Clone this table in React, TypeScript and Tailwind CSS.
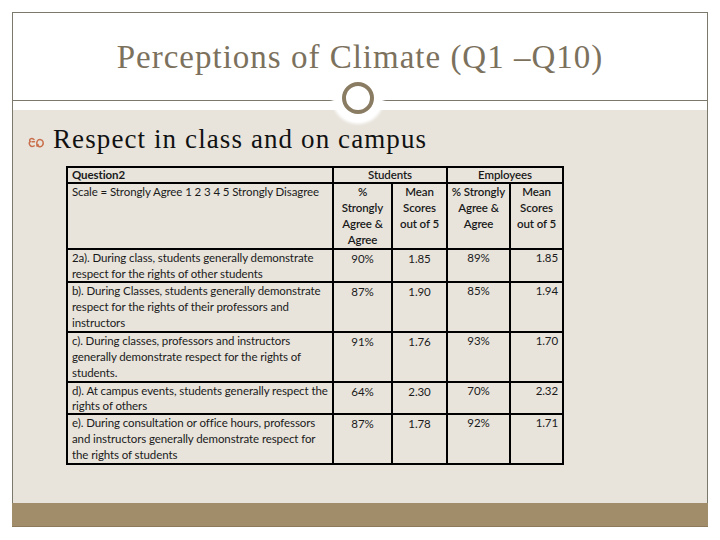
import React from "react";

const cell = "border-2 border-black align-top p-0";

function Bullet() {
  return (
    <svg width="17" height="12" viewBox="0 0 17 12" className="mt-[8px] mr-[8px] shrink-0">
      <path
        d="M6 2.5 C3.5 0.5 0.5 2 2.2 4.6 C0 6.5 2.5 11 6.2 8.8 M4 4.8 L6.5 4.8"
        fill="none"
        stroke="#c96f4c"
        strokeWidth="1.5"
        strokeLinecap="round"
      />
      <path
        d="M9 9 C8 5 9.5 2.5 12 2.5 C15 2.5 16 6 14.5 8.3 C13 10.5 9.8 10 10 7.5"
        fill="none"
        stroke="#c96f4c"
        strokeWidth="1.5"
        strokeLinecap="round"
      />
    </svg>
  );
}

const rows: { q: string[]; h: string; lh: string; sp: string; sm: string; ep: string; em: string }[] = [
  {
    q: ["2a). During class, students generally demonstrate", "respect for the rights of other students"],
    h: "h-[31px]",
    lh: "leading-[15.5px]",
    sp: "90%",
    sm: "1.85",
    ep: "89%",
    em: "1.85",
  },
  {
    q: [
      "b). During Classes, students generally demonstrate",
      "respect for the rights of their professors and",
      "instructors",
    ],
    h: "h-[49px]",
    lh: "leading-[16px]",
    sp: "87%",
    sm: "1.90",
    ep: "85%",
    em: "1.94",
  },
  {
    q: [
      "c). During classes, professors and instructors",
      "generally demonstrate respect for the rights of",
      "students.",
    ],
    h: "h-[48px]",
    lh: "leading-[16px]",
    sp: "91%",
    sm: "1.76",
    ep: "93%",
    em: "1.70",
  },
  {
    q: ["d). At campus events, students generally respect the", "rights of others"],
    h: "h-[30px]",
    lh: "leading-[15px]",
    sp: "64%",
    sm: "2.30",
    ep: "70%",
    em: "2.32",
  },
  {
    q: [
      "e). During consultation or office hours, professors",
      "and instructors generally demonstrate respect for",
      "the rights of students",
    ],
    h: "h-[49px]",
    lh: "leading-[16px]",
    sp: "87%",
    sm: "1.78",
    ep: "92%",
    em: "1.71",
  },
];

export default function App() {
  return (
    <div className="w-[720px] h-[540px] bg-white pt-[12px] px-[12px] overflow-hidden">
      <div className="relative h-[515px] border-x border-t border-[#7d786c] flex flex-col">
        <div className="h-[88px] shrink-0 border-b border-[#7d786c] flex items-center justify-center pt-[2px]">
          <span className="font-['Liberation_Serif',serif] text-[33px] tracking-[1px] text-[#7b715d]">
            Perceptions of Climate (Q1 –Q10)
          </span>
        </div>
        <div className="h-[9px] shrink-0 bg-white" />
        <div className="flex-1 bg-[#e8e4dc] flex flex-col">
          <div className="flex items-center pl-[15px] pt-[14px]">
            <Bullet />
            <span className="font-['Liberation_Serif',serif] text-[27px] leading-[30px] tracking-[1.1px] text-[#111]">
              Respect in class and on campus
            </span>
          </div>
          <div className="ml-[53px] mt-[12px]">
            <table className="table-fixed border-collapse w-[496px] font-['Lato',sans-serif] text-[11.5px] leading-[16px] text-[#1a1a1a] tracking-[-0.1px]">
              <colgroup>
                <col className="w-[266px]" />
                <col className="w-[59px]" />
                <col className="w-[55px]" />
                <col className="w-[63px]" />
                <col className="w-[53px]" />
              </colgroup>
              <tbody>
                <tr className="leading-[14px]">
                  <td className={`${cell} h-[14px] px-[4px] font-bold`}>Question2</td>
                  <td colSpan={2} className={`${cell} text-center font-semibold`}>
                    Students
                  </td>
                  <td colSpan={2} className={`${cell} text-center font-semibold`}>
                    Employees
                  </td>
                </tr>
                <tr>
                  <td className={`${cell} h-[64px] px-[4px]`}>Scale = Strongly Agree 1 2 3 4 5 Strongly Disagree</td>
                  <td className={`${cell} text-center font-semibold`}>
                    %<br />
                    Strongly<br />
                    Agree &amp;<br />
                    Agree
                  </td>
                  <td className={`${cell} text-center font-semibold`}>
                    Mean<br />
                    Scores<br />
                    out of 5
                  </td>
                  <td className={`${cell} text-center font-semibold`}>
                    % Strongly<br />
                    Agree &amp;<br />
                    Agree
                  </td>
                  <td className={`${cell} text-center font-semibold`}>
                    Mean<br />
                    Scores<br />
                    out of 5
                  </td>
                </tr>
                {rows.map((r, i) => (
                  <tr key={i} className={r.lh}>
                    <td className={`${cell} ${r.h} px-[4px] whitespace-nowrap`}>
                      {r.q.map((l, j) => (
                        <div key={j}>{l}</div>
                      ))}
                    </td>
                    <td className={`${cell} text-center pt-[1px]`}>{r.sp}</td>
                    <td className={`${cell} text-center pt-[1px]`}>{r.sm}</td>
                    <td className={`${cell} text-center`}>{r.ep}</td>
                    <td className={`${cell} text-right pr-[4px]`}>{r.em}</td>
                  </tr>
                ))}
              </tbody>
            </table>
          </div>
        </div>
        <div className="h-[24px] shrink-0 -mx-[1px] bg-[#a28d6b] border-b border-[#8d7a5b]" />
        <div className="absolute left-[321px] top-[61px] w-[48px] h-[48px] rounded-full bg-white shadow-[0_0_3px_2px_white] flex items-center justify-center">
          <div className="w-[32px] h-[32px] rounded-full border-[4px] border-[#8a7c62]" />
        </div>
      </div>
    </div>
  );
}
